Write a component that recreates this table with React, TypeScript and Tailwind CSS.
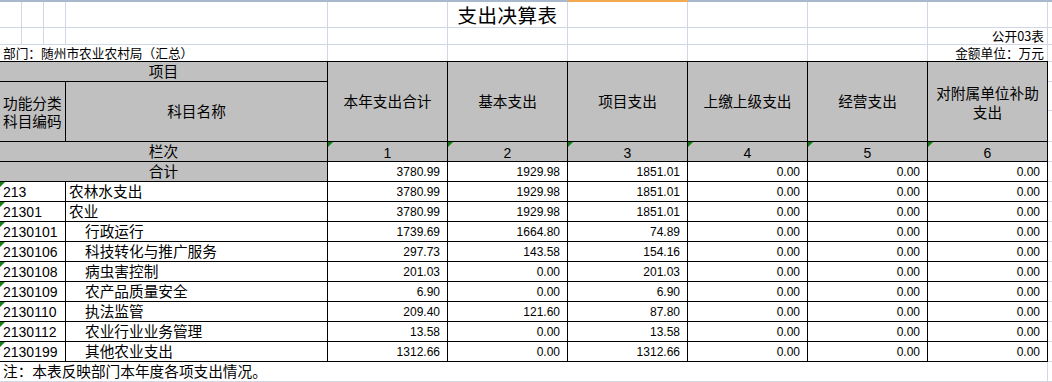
import React from "react";

const CJK = { fontFamily: '"Noto Sans CJK SC", "Noto Sans", sans-serif' };
const LAT = { fontFamily: '"Liberation Sans", Arial, sans-serif' };

type Row = { code: string; name: string; indent: boolean; v: string[] };

const Z = ["0.00", "0.00", "0.00"];
const rows: Row[] = [
  { code: "213", name: "农林水支出", indent: false, v: ["3780.99", "1929.98", "1851.01", ...Z] },
  { code: "21301", name: "农业", indent: false, v: ["3780.99", "1929.98", "1851.01", ...Z] },
  { code: "2130101", name: "行政运行", indent: true, v: ["1739.69", "1664.80", "74.89", ...Z] },
  { code: "2130106", name: "科技转化与推广服务", indent: true, v: ["297.73", "143.58", "154.16", ...Z] },
  { code: "2130108", name: "病虫害控制", indent: true, v: ["201.03", "0.00", "201.03", ...Z] },
  { code: "2130109", name: "农产品质量安全", indent: true, v: ["6.90", "0.00", "6.90", ...Z] },
  { code: "2130110", name: "执法监管", indent: true, v: ["209.40", "121.60", "87.80", ...Z] },
  { code: "2130112", name: "农业行业业务管理", indent: true, v: ["13.58", "0.00", "13.58", ...Z] },
  { code: "2130199", name: "其他农业支出", indent: true, v: ["1312.66", "0.00", "1312.66", ...Z] },
];

const Tri = () => (
  <div className="absolute left-0 top-0 w-0 h-0 border-t-[5px] border-r-[5px] border-t-[#108010] border-r-transparent" />
);

const G = "border-[#d0d7e5]";

function GridCell({ w, children, right, center }: { w: string; children?: React.ReactNode; right?: boolean; center?: boolean }) {
  return (
    <div
      className={`${w} h-full shrink-0 border-r ${G} flex items-center ${right ? "justify-end pr-[3px]" : center ? "justify-center" : ""} whitespace-nowrap`}
    >
      {children}
    </div>
  );
}

export default function App() {
  const headers = ["本年支出合计", "基本支出", "项目支出", "上缴上级支出", "经营支出"];
  return (
    <div className="w-[1052px] h-[382px] overflow-hidden bg-white text-black" style={CJK}>
      {/* top column header edge */}
      <div className="flex h-[2px]">
        <div className="w-[568px] bg-[#a7b8cd]" />
        <div className="w-[120px] bg-[#f2a94f]" />
        <div className="flex-1 bg-[#a7b8cd]" />
      </div>
      {/* title row */}
      <div className={`flex h-[26px] border-b ${G}`}>
        <GridCell w="w-[22px]" />
        <GridCell w="w-[22px]" />
        <GridCell w="w-[22px]" />
        <GridCell w="w-[262px]" />
        <GridCell w="w-[120px]" />
        <GridCell w="w-[120px]" center>
          <span className="text-[19.5px] leading-none tracking-[0.5px] pt-[1px]">支出决算表</span>
        </GridCell>
        <GridCell w="w-[120px]" />
        <GridCell w="w-[120px]" />
        <GridCell w="w-[120px]" />
        <GridCell w="w-[120px]" />
        <div className="flex-1" />
      </div>
      {/* 公开03表 row */}
      <div className={`flex h-[17px] border-b ${G}`}>
        <GridCell w="w-[22px]" />
        <GridCell w="w-[22px]" />
        <GridCell w="w-[22px]" />
        <GridCell w="w-[262px]" />
        <GridCell w="w-[120px]" />
        <GridCell w="w-[120px]" />
        <GridCell w="w-[120px]" />
        <GridCell w="w-[120px]" />
        <GridCell w="w-[120px]" />
        <GridCell w="w-[120px]" right>
          <span className="text-[12.7px] leading-none">公开03表</span>
        </GridCell>
        <div className="flex-1" />
      </div>
      {/* 部门 row */}
      <div className="flex h-[17px]">
        <div className="w-[1048px] flex h-full border-b border-black">
          <div className={`w-[328px] h-full border-r ${G} flex items-center pl-[3px]`}>
            <span className="text-[12.7px] leading-none">部门：随州市农业农村局（汇总）</span>
          </div>
          <GridCell w="w-[120px]" />
          <GridCell w="w-[120px]" />
          <GridCell w="w-[120px]" />
          <GridCell w="w-[120px]" />
          <GridCell w="w-[120px]" />
          <GridCell w="w-[120px]" right>
            <span className="text-[12.7px] leading-none">金额单位：万元</span>
          </GridCell>
        </div>
        <div className={`flex-1 border-b ${G}`} />
      </div>

      {/* header block */}
      <div className="flex h-[80px] text-[14.67px]">
        <div className="w-[328px] flex flex-col shrink-0">
          <div className="h-[20px] bg-[#c0c0c0] border-r border-b border-black flex items-center justify-center leading-none">
            项目
          </div>
          <div className="flex h-[60px]">
            <div className="w-[66px] bg-[#c0c0c0] border-r border-b border-black flex flex-col justify-center pl-[3px] leading-[17.5px] overflow-hidden">
              <span className="block">功能分类</span>
              <span className="block">科目编码</span>
            </div>
            <div className="w-[262px] bg-[#c0c0c0] border-r border-b border-black flex items-center justify-center leading-none">
              科目名称
            </div>
          </div>
        </div>
        {headers.map((h) => (
          <div
            key={h}
            className="w-[120px] shrink-0 bg-[#c0c0c0] border-r border-b border-black flex items-center justify-center leading-none"
          >
            {h}
          </div>
        ))}
        <div className="w-[120px] shrink-0 bg-[#c0c0c0] border-r border-b border-black flex flex-col items-center justify-center leading-[19px]">
          <span>对附属单位补助</span>
          <span>支出</span>
        </div>
        <div className="flex-1 flex flex-col">
          <div className={`h-[20px] border-b ${G}`} />
          <div className={`h-[29px] border-b ${G}`} />
          <div className={`h-[31px] border-b ${G}`} />
        </div>
      </div>

      {/* 栏次 row */}
      <div className="flex h-[20px] text-[14.67px]">
        <div className="w-[328px] shrink-0 bg-[#c0c0c0] border-r border-b border-black flex items-center justify-center leading-none">
          栏次
        </div>
        {[1, 2, 3, 4, 5, 6].map((n) => (
          <div
            key={n}
            className="relative w-[120px] shrink-0 bg-[#c0c0c0] border-r border-b border-black flex items-center justify-center leading-none text-[14px]"
            style={LAT}
          >
            <Tri />
            <span className="pt-[2px]">{n}</span>
          </div>
        ))}
        <div className={`flex-1 border-b ${G}`} />
      </div>

      {/* 合计 row */}
      <div className="flex h-[20px] text-[14.67px]">
        <div className="w-[328px] shrink-0 bg-[#c0c0c0] border-r border-b border-black flex items-center justify-center leading-none">
          合计
        </div>
        {rows[0].v.map((v, i) => (
          <div
            key={i}
            className="w-[120px] shrink-0 border-r border-b border-black flex items-center justify-end pr-[7px] text-[12px] leading-none"
            style={LAT}
          >
            {v}
          </div>
        ))}
        <div className={`flex-1 border-b ${G}`} />
      </div>

      {rows.map((r) => (
        <div key={r.code} className="flex h-[20px] text-[14.67px]">
          <div
            className="relative w-[66px] shrink-0 border-r border-b border-black flex items-center pl-[3px] text-[14px] leading-none"
            style={LAT}
          >
            <Tri />
            {r.code}
          </div>
          <div
            className={`w-[262px] shrink-0 border-r border-b border-black flex items-center leading-none whitespace-nowrap ${
              r.indent ? "pl-[19px]" : "pl-[3px]"
            }`}
          >
            {r.name}
          </div>
          {r.v.map((v, i) => (
            <div
              key={i}
              className="w-[120px] shrink-0 border-r border-b border-black flex items-center justify-end pr-[7px] text-[12px] leading-none"
              style={LAT}
            >
              {v}
            </div>
          ))}
          <div className={`flex-1 border-b ${G}`} />
        </div>
      ))}

      {/* note row */}
      <div className="flex h-[20px]">
        <div className={`w-[1048px] shrink-0 border-r border-b ${G} flex items-center pl-[3px] text-[14.67px] leading-none`}>
          注：本表反映部门本年度各项支出情况。
        </div>
        <div className={`flex-1 border-b ${G}`} />
      </div>
    </div>
  );
}
